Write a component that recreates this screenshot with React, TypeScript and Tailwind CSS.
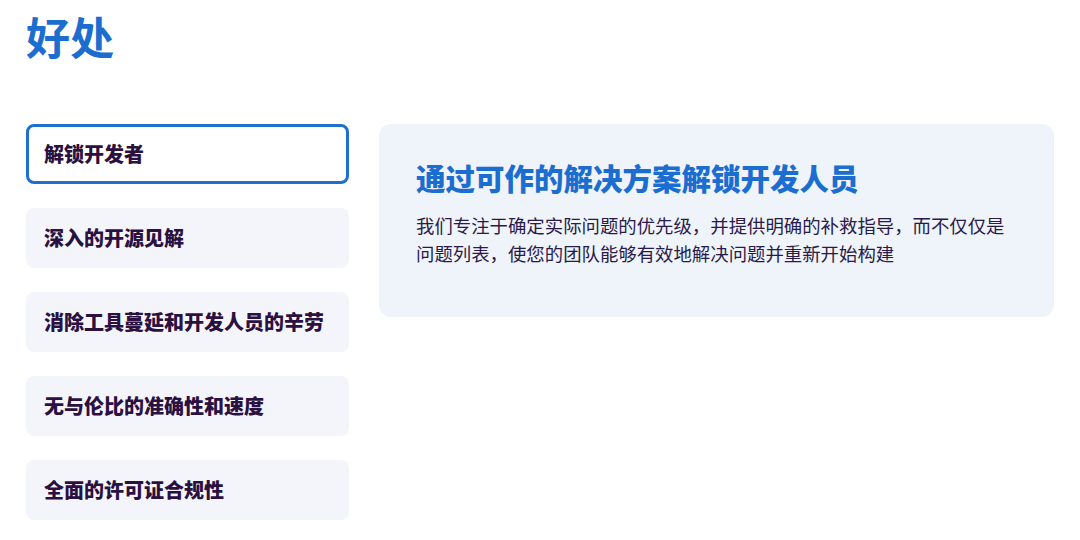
import { useState } from "react";

const tabs = [
  "解锁开发者",
  "深入的开源见解",
  "消除工具蔓延和开发人员的辛劳",
  "无与伦比的准确性和速度",
  "全面的许可证合规性",
];

export default function App() {
  const [active, setActive] = useState(0);

  return (
    <div
      className="w-[1080px] h-[540px] bg-white overflow-hidden pl-[26px]"
      style={{ fontFamily: '"Noto Sans CJK SC", "Noto Sans", sans-serif' }}
    >
      {/* TITLE */}
      <h1 className="pt-[10px] text-[44px] leading-[52px] font-bold text-[#1c6dd0]">好处</h1>

      {/* CONTENT */}
      <div className="mt-[62px] flex gap-[30px]">
        <div className="flex flex-col gap-6 w-[323px]">
          {tabs.map((t, i) => (
            <button
              key={t}
              onClick={() => setActive(i)}
              className={`h-[60px] rounded-lg flex items-center px-[15px] text-left text-[20px] font-black text-[#2b1040] ${
                active === i ? "bg-white border-[3px] border-[#1f6fcf]" : "bg-[#f3f5fb] border-[3px] border-transparent"
              }`}
            >
              {t}
            </button>
          ))}
        </div>

        <div className="w-[675px] h-[193px] rounded-xl bg-[#eff3fa] pl-[37px] pr-[16px] pt-[33px]">
          <h2 className="text-[29.5px] leading-[40px] font-black text-[#1c6dd0]">通过可作的解决方案解锁开发人员</h2>
          <p className="mt-[14px] text-[18.4px] leading-[28px] text-[#2a1a4a]">
            我们专注于确定实际问题的优先级，并提供明确的补救指导，而不仅仅是
            <br />
            问题列表，使您的团队能够有效地解决问题并重新开始构建
          </p>
        </div>
      </div>
    </div>
  );
}
